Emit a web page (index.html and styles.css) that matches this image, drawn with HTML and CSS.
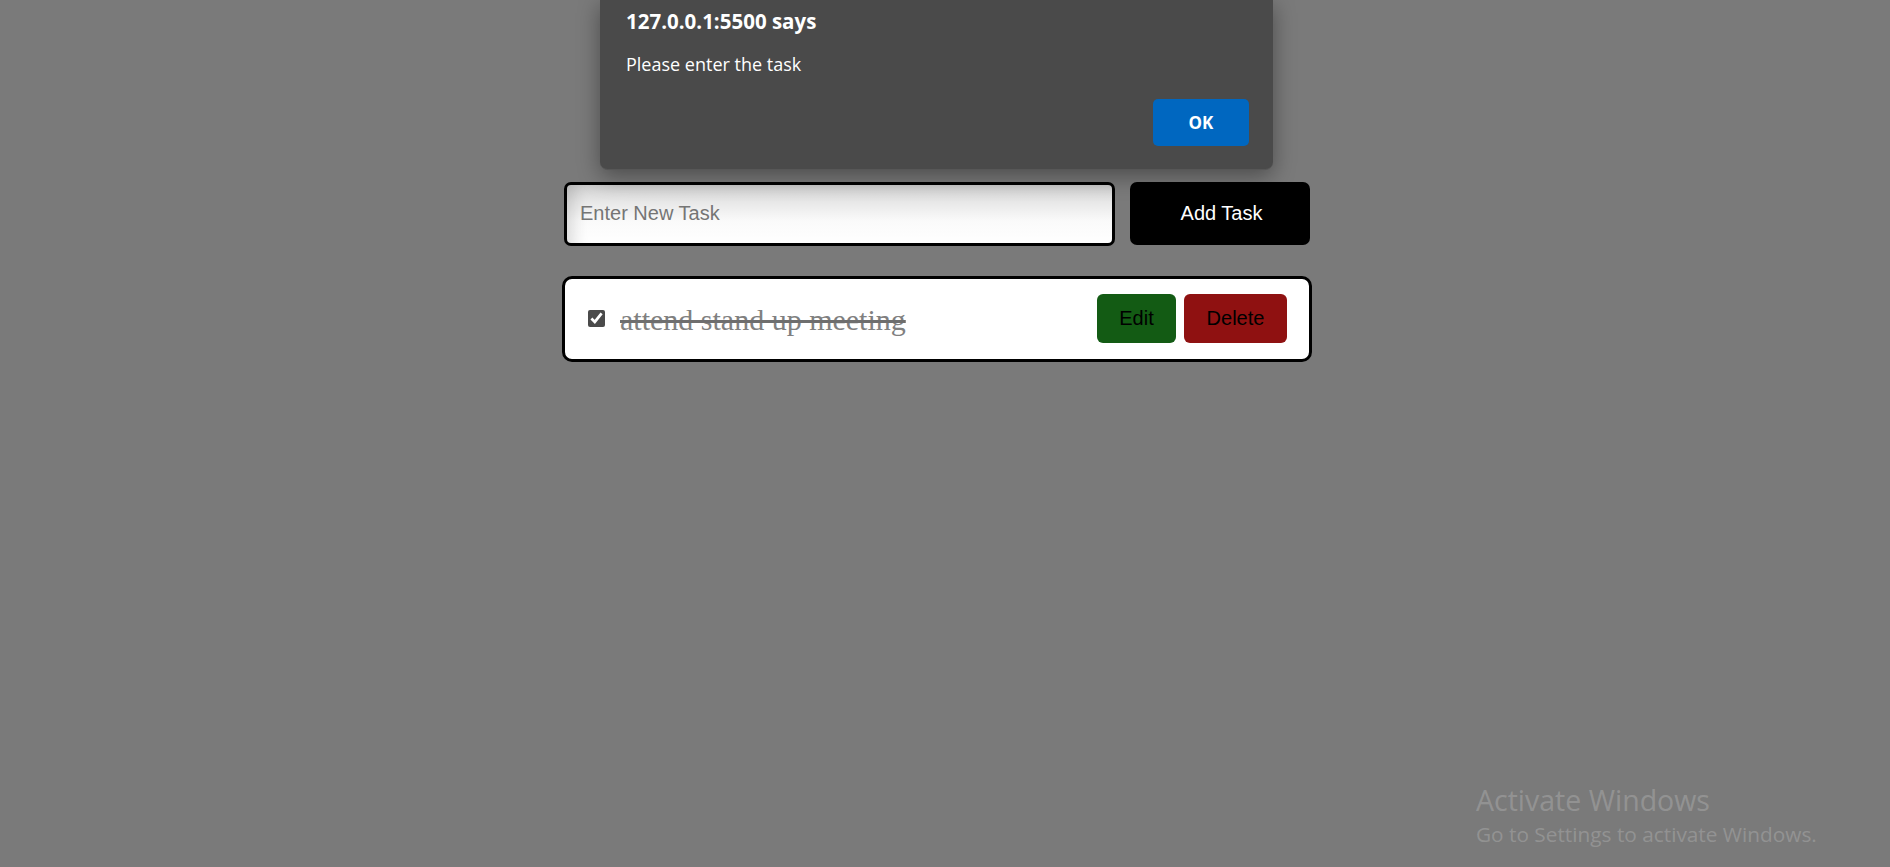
FILE: index.html
```html
<!DOCTYPE html>
<html lang="en">
<head>
<meta charset="utf-8">
<title>To-Do</title>
<link rel="stylesheet" href="styles.css">
</head>
<body>
<div class="app">
  <div class="form">
    <input class="task-input" type="text" placeholder="Enter New Task">
    <button class="add-btn">Add Task</button>
  </div>
  <ul class="list">
    <li class="task">
      <input class="check" type="checkbox" checked>
      <span class="task-text">attend stand up meeting</span>
      <div class="actions">
        <button class="btn edit">Edit</button>
        <button class="btn delete">Delete</button>
      </div>
    </li>
  </ul>
</div>

<div class="dialog">
  <div class="dialog-title">127.0.0.1:5500 says</div>
  <div class="dialog-msg">Please enter the task</div>
  <div class="dialog-foot">
    <button class="ok-btn">OK</button>
  </div>
</div>

<div class="watermark">
  <div class="wm-title">Activate Windows</div>
  <div class="wm-sub">Go to Settings to activate Windows.</div>
</div>
</body>
</html>
```

FILE: styles.css
```css
html, body {
  margin: 0;
  padding: 0;
}
body {
  background: #7a7a7a;
  width: 1890px;
  height: 867px;
  overflow: hidden;
  position: relative;
  font-family: "Liberation Sans", Arial, sans-serif;
}

.app {
  width: 750px;
  margin-left: 562px;
  padding-top: 182px;
}

.form {
  display: flex;
  align-items: flex-start;
  gap: 15px;
  padding-left: 2px;
}

.task-input {
  box-sizing: border-box;
  width: 551px;
  height: 64px;
  margin: 0;
  border: 3px solid #000;
  border-radius: 7px;
  padding: 0 0 2px 13px;
  font-family: "Liberation Sans", Arial, sans-serif;
  font-size: 20px;
  color: #000;
  background: linear-gradient(to bottom, #d0d0d0 0%, #e8e8e8 30%, #fafafa 62%, #fff 100%);
  box-shadow: inset 16px 4px 16px -10px rgba(0, 0, 0, 0.14);
  outline: none;
}
.task-input::placeholder {
  color: #757575;
}

.add-btn {
  box-sizing: border-box;
  width: 180px;
  height: 63px;
  margin: 0;
  border: none;
  border-radius: 7px;
  padding: 0 0 0 3px;
  background: #000;
  color: #fff;
  font-family: "Liberation Sans", Arial, sans-serif;
  font-size: 20px;
  cursor: pointer;
}

.list {
  list-style: none;
  margin: 30px 0 0 0;
  padding: 0;
}

.task {
  box-sizing: border-box;
  width: 750px;
  height: 86px;
  border: 3px solid #000;
  border-radius: 10px;
  background: #fff;
  display: flex;
  align-items: center;
  padding: 0 22px 1px 23px;
}

.check {
  width: 17px;
  height: 17px;
  margin: 0;
  accent-color: #4a4a4a;
}

.task-text {
  flex: 1;
  margin-left: 15px;
  padding-top: 3px;
  font-family: "Liberation Serif", "Times New Roman", serif;
  font-size: 30px;
  color: #808080;
  text-decoration: line-through;
  text-decoration-color: #6e6e6e;
  text-decoration-thickness: 3px;
}

.actions {
  display: flex;
  gap: 8px;
}

.btn {
  height: 49px;
  margin: 0;
  border: none;
  border-radius: 6px;
  padding: 0 22px;
  font-family: "Liberation Sans", Arial, sans-serif;
  font-size: 20px;
  color: #000;
  cursor: pointer;
}
.edit {
  width: 79px;
  background: #135b14;
}
.delete {
  width: 103px;
  background: #8f1111;
}

/* browser alert dialog */
.dialog {
  position: absolute;
  left: 600px;
  top: 0;
  box-sizing: border-box;
  width: 673px;
  height: 170px;
  padding: 8px 24px 0 26px;
  background: #4a4a4a;
  border-radius: 0 0 8px 8px;
  border-bottom: 1px solid #575757;
  box-shadow: 0 6px 22px rgba(0, 0, 0, 0.38);
  font-family: "Open Sans", "Noto Sans", sans-serif;
  color: #fff;
}
.dialog-title {
  font-size: 20.5px;
  font-weight: 700;
  line-height: 26px;
}
.dialog-msg {
  margin-top: 18px;
  font-size: 18px;
  line-height: 24px;
}
.dialog-foot {
  display: flex;
  justify-content: flex-end;
  margin-top: 23px;
}
.ok-btn {
  width: 96px;
  height: 47px;
  margin: 0;
  border: none;
  border-radius: 5px;
  background: #0067c0;
  color: #fff;
  font-family: "Open Sans", "Noto Sans", sans-serif;
  font-size: 17px;
  font-weight: 700;
}

/* windows watermark */
.watermark {
  position: absolute;
  left: 1476px;
  top: 783px;
  font-family: "Open Sans", "Noto Sans", sans-serif;
  color: rgba(255, 255, 255, 0.2);
}
.wm-title {
  font-size: 28.5px;
  line-height: 34px;
}
.wm-sub {
  margin-top: 3px;
  font-size: 20.8px;
  line-height: 28px;
}
```
